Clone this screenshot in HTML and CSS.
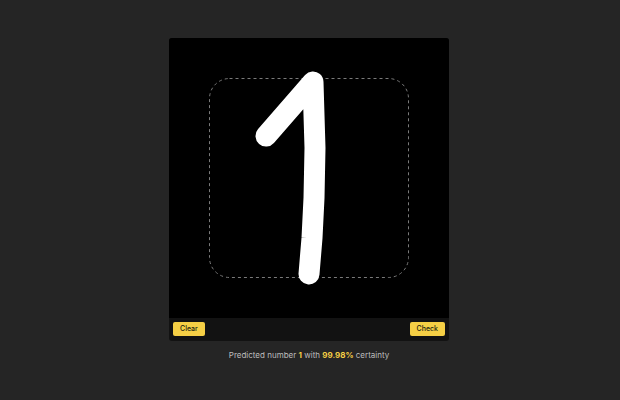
FILE: index.html
```html
<!DOCTYPE html>
<html>
<head>
<meta charset="utf-8">
<link rel="stylesheet" href="styles.css">
</head>
<body>
<main class="app">
  <section class="card">
    <div class="canvas">
      <svg class="drawing" width="280" height="280" viewBox="0 0 280 280">
        <rect x="40.5" y="40.5" width="199" height="199" rx="20" ry="20" fill="none" stroke="#7a7a7a" stroke-width="1" stroke-dasharray="3 3"/>
        <path d="M97 98 L144 44 L146 110 L145 160 L143 200 L140 236" fill="none" stroke="#fff" stroke-width="21" stroke-linecap="round" stroke-linejoin="round"/>
      </svg>
    </div>
    <div class="toolbar">
      <button class="btn">Clear</button>
      <button class="btn">Check</button>
    </div>
  </section>
  <p class="result">Predicted number <b class="hl">1</b> with <b class="hl">99.98%</b> certainty</p>
</main>
</body>
</html>
```

FILE: styles.css
```css
html, body {
  margin: 0;
  padding: 0;
  height: 100%;
  background: #252525;
}
body {
  font-family: Inter, "Noto Sans", "Liberation Sans", sans-serif;
}
.app {
  height: 100%;
  display: flex;
  flex-direction: column;
  align-items: center;
  justify-content: center;
  padding: 0 2px 1px 0;
  box-sizing: border-box;
}
.card {
  width: 280px;
  background: #121212;
  border-radius: 3px;
  overflow: hidden;
}
.canvas {
  width: 280px;
  height: 280px;
  background: #000;
}
.drawing {
  display: block;
}
.toolbar {
  display: flex;
  justify-content: space-between;
  align-items: center;
  padding: 4px 4px 5px 4px;
}
.btn {
  font-family: Inter, "Noto Sans", "Liberation Sans", sans-serif;
  font-size: 7px;
  font-weight: 500;
  color: #231f10;
  background: #f5cf45;
  border: none;
  border-radius: 2px;
  height: 14px;
  padding: 0 7px;
  line-height: 14px;
}
.result {
  margin: 8px 0 0 0;
  font-size: 8px;
  line-height: 12px;
  color: #bdbdbd;
}
.hl {
  color: #f5cf45;
  font-weight: 700;
}
```
